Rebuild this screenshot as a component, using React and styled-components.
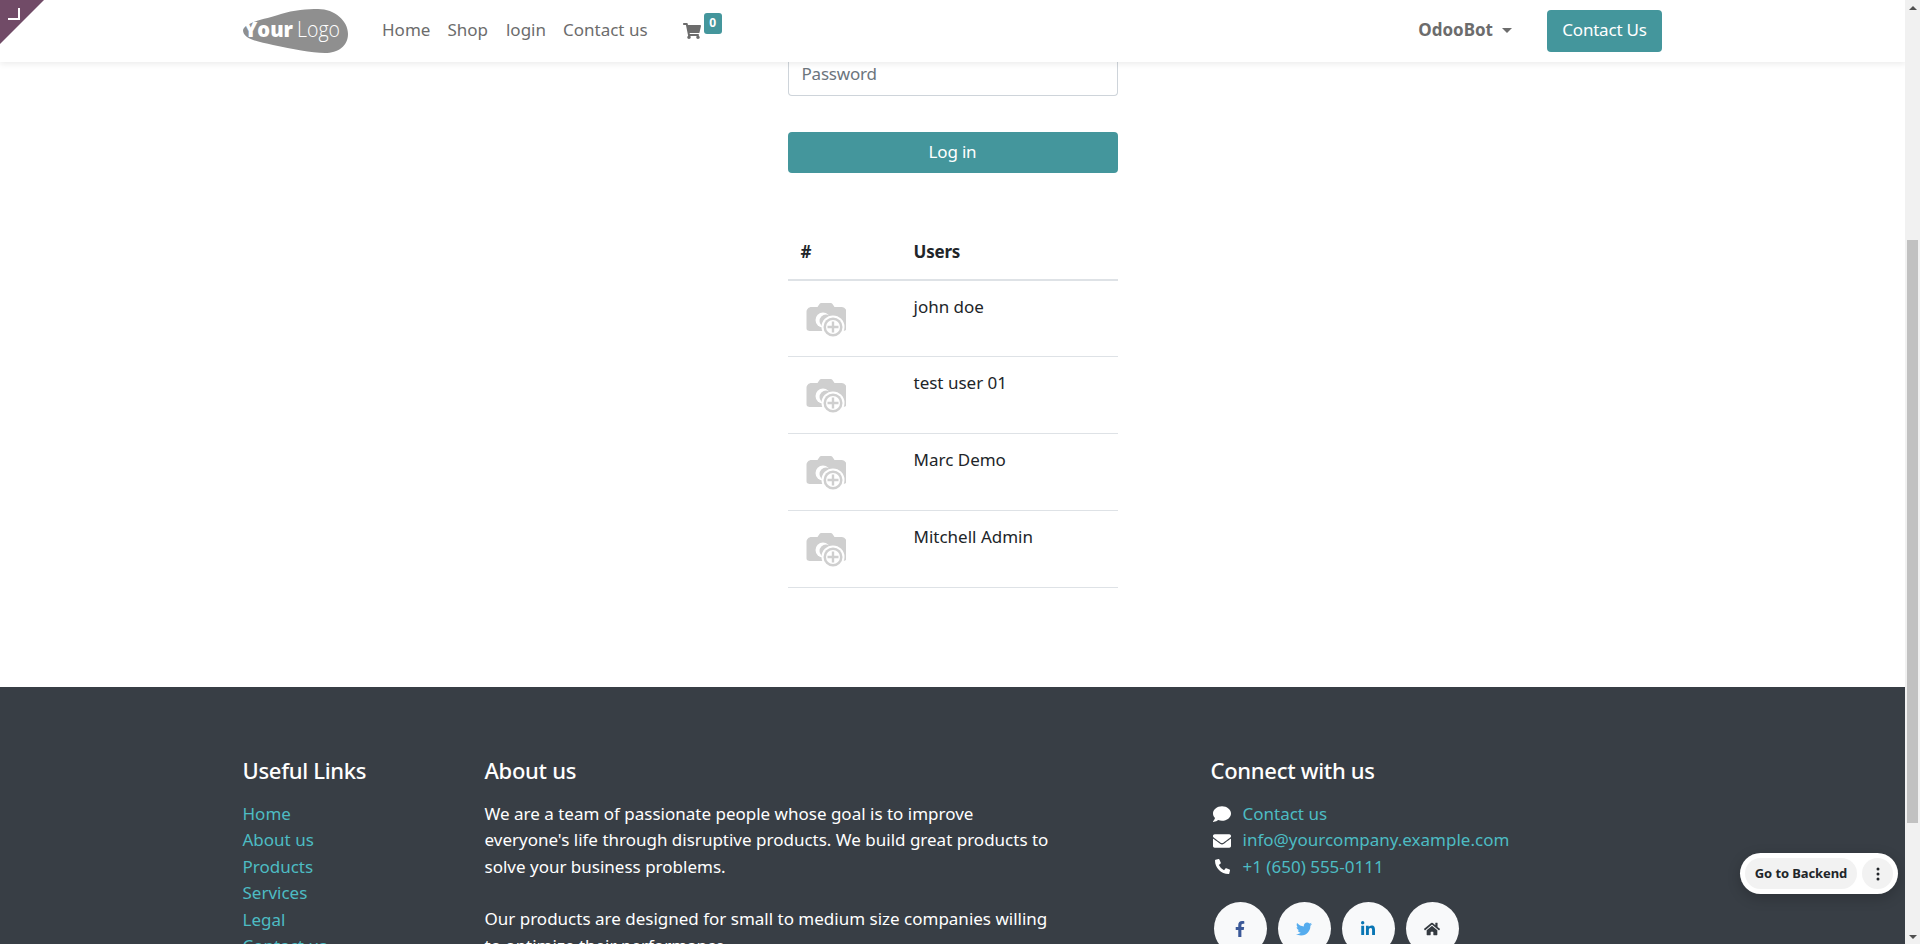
import React from "react";
import styled, { createGlobalStyle } from "styled-components";
import { FaShoppingCart, FaComment, FaEnvelope, FaPhoneAlt, FaFacebookF, FaTwitter, FaLinkedinIn, FaHome } from "react-icons/fa";

const Global = createGlobalStyle`
  html, body { margin: 0; padding: 0; height: 100%; overflow: hidden; }
  body { font-family: "Noto Sans", "Open Sans", sans-serif; font-size: 17px; line-height: 1.55; color: #212529; background: #fff; }
  * { box-sizing: border-box; }
`;

const Shell = styled.div`display: flex; height: 944px; overflow: hidden;`;
const Viewport = styled.div`flex: 1; min-width: 0; position: relative; overflow: hidden; display: flex; flex-direction: column;`;

const ScrollTrack = styled.div`width: 15px; flex: none; background: #f1f1f1; display: flex; flex-direction: column; align-items: center; padding: 0 2px;`;
const ArrowBtn = styled.div`
  flex: none; height: 15px; width: 100%; display: flex; align-items: center; justify-content: center;
  &::before { content: ""; border-left: 4px solid transparent; border-right: 4px solid transparent; ${p => p.$down ? "border-top: 4px solid #505050;" : "border-bottom: 4px solid #505050;"} }
`;
const ScrollGap = styled.div`flex: ${p => p.$size} 0 0;`;
const ScrollThumb = styled.div`flex: none; height: 583px; width: 100%; background: #c1c1c1;`;

const Header = styled.header`flex: none; height: 62px; background: #fff; box-shadow: 0 2px 6px rgba(0,0,0,.08); position: relative; z-index: 2; margin-right: -1px;`;
const Container = styled.div`width: 1420px; margin: 0 auto; display: flex; align-items: center;`;
const HeaderRow = styled(Container)`height: 62px; padding-bottom: 1px;`;
const LogoSvg = styled.svg`width: 105px; height: 44px; flex: none; margin-right: 34px;`;
const NavLink = styled.a`color: #6c6c6c; font-size: 17px; margin-right: ${p => p.$gap}px; white-space: nowrap;`;
const Cart = styled.span`position: relative; display: flex; align-items: center; color: #6c6c6c; margin-left: 18px; font-size: 18px;`;
const Badge = styled.span`
  position: absolute; left: 21px; top: -9px; width: 18px; height: 21px; border-radius: 3px; background: #44969c;
  color: #fff; font-size: 12px; font-weight: 700; display: flex; align-items: center; justify-content: center; line-height: 1;
`;
const Spacer = styled.div`flex: 1;`;
const UserMenu = styled.span`color: #6c6c6c; font-weight: 700; font-size: 17px; display: flex; align-items: center; margin-right: 35px;
  &::after { content: ""; margin-left: 9px; border-top: 5px solid #6c6c6c; border-left: 5px solid transparent; border-right: 5px solid transparent; }
`;
const ContactBtn = styled.a`
  width: 115px; height: 42px; margin-right: 1px; background: #44969c; border-radius: 4px; color: #fff; font-size: 17px; letter-spacing: -0.2px;
  display: flex; align-items: center; justify-content: center; white-space: nowrap;
`;

const Main = styled.main`flex: none; height: 625px; display: flex; justify-content: center;`;
const Column = styled.div`width: 330px;`;
const PasswordField = styled.div`height: 34px; border: 1px solid #ced4da; border-top: none; border-radius: 0 0 4px 4px; padding-left: 13px; color: #6c757d; font-size: 17px; line-height: 24px; letter-spacing: -0.2px;`;
const LoginBtn = styled.button`
  display: block; width: 100%; height: 41px; margin-top: 36px; border: none; border-radius: 4px; background: #44969c; color: #fff;
  font: inherit; font-size: 17px; letter-spacing: -0.2px;
`;
const Table = styled.table`width: 100%; margin-top: 38px; border-collapse: collapse; font-size: 17px;
  th { text-align: left; font-weight: 700; height: 69px; padding: 15px 0 0 14px; border-bottom: 2px solid #dee2e6; letter-spacing: -0.2px; }
  td { height: 76.8px; padding: 13px 0 0 14px; vertical-align: top; border-bottom: 1px solid #dee2e6; }
  th:first-child, td:first-child { width: 112px; }
  th:first-child { padding-left: 13px; }
  td:first-child { padding: 22px 0 0 18px; }
`;
const CameraSvg = styled.svg`display: block; width: 40px; height: 36px;`;

const Footer = styled.footer`flex: 1; background: #383e45; color: #fff; padding-top: 67px;`;
const FooterGrid = styled(Container)`align-items: flex-start;`;
const FootCol = styled.div`width: ${p => p.$w}px; flex: none;`;
const FootTitle = styled.h5`margin: 0 0 15px; font-size: 22px; font-weight: 500; line-height: 32px; letter-spacing: -0.3px;`;
const LinkList = styled.div`display: flex; flex-direction: column; line-height: 26.4px;`;
const FootLink = styled.a`color: #4dbcc3; font-size: 17px; white-space: nowrap;`;
const AboutText = styled.p`margin: 0 0 26px; font-size: 17px; line-height: 26.4px; white-space: nowrap;`;
const ContactRow = styled.div`display: flex; align-items: center; height: 26.4px; font-size: 17px;`;
const ContactIcon = styled.span`width: 32px; flex: none; padding-left: ${p => p.$pad}px; display: flex; align-items: center; color: #fff; font-size: ${p => p.$size}px;`;
const Socials = styled.div`display: flex; gap: 11px; margin: 22px 0 0 3px;`;
const Social = styled.span`width: 53px; height: 53px; border-radius: 50%; background: #f8f9fa; display: flex; align-items: center; justify-content: center; color: ${p => p.$color}; font-size: 16px;`;

const Ribbon = styled.div`
  position: absolute; left: 0; top: 0; width: 44px; height: 44px; background: #714b67; clip-path: polygon(0 0, 100% 0, 0 100%); z-index: 3;
  &::after { content: ""; position: absolute; left: 8px; top: 8px; width: 10px; height: 10px; border-right: 2px solid #fff; border-bottom: 2px solid #fff; }
`;
const BackendPill = styled.div`
  position: absolute; left: 1740px; top: 853px; width: 158px; height: 41px; border-radius: 21px; background: #fff; z-index: 3;
  box-shadow: 0 4px 14px rgba(0,0,0,.2); display: flex; align-items: center; padding: 0 5px; gap: 5px;
`;
const BackendBtn = styled.span`flex: 1; height: 31px; border-radius: 16px; background: #f2f2f2; color: #212529; font-size: 13px; font-weight: 700; letter-spacing: -0.1px; display: flex; align-items: center; justify-content: center; white-space: nowrap;`;
const KebabBtn = styled.span`width: 31px; height: 31px; border-radius: 50%; background: #f2f2f2; flex: none; display: flex; align-items: center; justify-content: center; color: #212529;`;

const Camera = () => (
  <CameraSvg viewBox="0 0 40 36" aria-hidden="true">
    <path d="M5 4h6l2-3c.4-.6 1-1 1.800-1h9.400c.8 0 1.400.4 1.800 1l2 3h7c2.800 0 5 2.200 5 5v16c0 2.800-2.200 3-5 3H5c-2.800 0-5-.2-5-3V9c0-2.800 2.200-5 5-5z" fill="#cfcfcf" transform="translate(.5 0)" />
    <circle cx="17" cy="17" r="7.500" fill="#fff" />
    <circle cx="20" cy="18" r="6.500" fill="#cfcfcf" />
    <circle cx="27" cy="24" r="11.500" fill="#fff" />
    <circle cx="27" cy="24" r="9.500" fill="#cfcfcf" />
    <circle cx="27" cy="24" r="7" fill="#fff" />
    <path d="M25.800 18.500h2.400v4.300h4.300v2.400h-4.300v4.300h-2.400v-4.300h-4.300v-2.400h4.300z" fill="#cfcfcf" />
  </CameraSvg>
);

const Logo = () => (
  <LogoSvg viewBox="0 0 105 44" aria-label="Your Logo">
    <path d="M0 21C3 12 25 10 38 5 50 1 65 0 75 0c17 0 30 12 30 25 0 12-10 19-23 19-14 0-32-4-52-8C15 33 0 30 0 21z" fill="#8f8f8f" />
    <text x="1" y="28" fontFamily="Open Sans, sans-serif" fontWeight="800" fontSize="21" textLength="49" lengthAdjust="spacingAndGlyphs" fill="#fff">Your</text>
    <text x="54" y="28" fontFamily="Open Sans, sans-serif" fontWeight="300" fontSize="22" textLength="43" lengthAdjust="spacingAndGlyphs" fill="#fff">Logo</text>
  </LogoSvg>
);

const Kebab = () => (
  <svg width="4" height="14" viewBox="0 0 4 14" aria-hidden="true"><circle cx="2" cy="2" r="1.500" fill="currentColor" /><circle cx="2" cy="7" r="1.500" fill="currentColor" /><circle cx="2" cy="12" r="1.500" fill="currentColor" /></svg>
);

const users = ["john doe", "test user 01", "Marc Demo", "Mitchell Admin"];
const links = ["Home", "About us", "Products", "Services", "Legal", "Contact us"];

export default function App() {
  return (
    <>
      <Global />
      <Shell>
        <Viewport>
          <Ribbon />
          <Header>
            <HeaderRow>
              <Logo />
              <NavLink $gap={17}>Home</NavLink>
              <NavLink $gap={18}>Shop</NavLink>
              <NavLink $gap={17}>login</NavLink>
              <NavLink $gap={17}>Contact us</NavLink>
              <Cart><FaShoppingCart /><Badge>0</Badge></Cart>
              <Spacer />
              <UserMenu>OdooBot</UserMenu>
              <ContactBtn>Contact Us</ContactBtn>
            </HeaderRow>
          </Header>
          <Main>
            <Column>
              <PasswordField>Password</PasswordField>
              <LoginBtn>Log in</LoginBtn>
              <Table>
                <thead><tr><th>#</th><th>Users</th></tr></thead>
                <tbody>
                  {users.map(u => (<tr key={u}><td><Camera /></td><td>{u}</td></tr>))}
                </tbody>
              </Table>
            </Column>
          </Main>
          <Footer>
            <FooterGrid>
              <FootCol $w={242}>
                <FootTitle>Useful Links</FootTitle>
                <LinkList>{links.map(l => <FootLink key={l}>{l}</FootLink>)}</LinkList>
              </FootCol>
              <FootCol $w={726}>
                <FootTitle>About us</FootTitle>
                <AboutText>We are a team of passionate people whose goal is to improve<br />everyone's life through disruptive products. We build great products to<br />solve your business problems.</AboutText>
                <AboutText>Our products are designed for small to medium size companies willing<br />to optimize their performance.</AboutText>
              </FootCol>
              <FootCol $w={452}>
                <FootTitle>Connect with us</FootTitle>
                <ContactRow><ContactIcon $pad={2} $size={18}><FaComment /></ContactIcon><FootLink>Contact us</FootLink></ContactRow>
                <ContactRow><ContactIcon $pad={2} $size={18}><FaEnvelope /></ContactIcon><FootLink>info@yourcompany.example.com</FootLink></ContactRow>
                <ContactRow><ContactIcon $pad={4} $size={15}><FaPhoneAlt /></ContactIcon><FootLink>+1 (650) 555-0111</FootLink></ContactRow>
                <Socials>
                  <Social $color="#3b5998"><FaFacebookF /></Social>
                  <Social $color="#55acee"><FaTwitter /></Social>
                  <Social $color="#0976b4"><FaLinkedinIn /></Social>
                  <Social $color="#343a40"><FaHome /></Social>
                </Socials>
              </FootCol>
            </FooterGrid>
          </Footer>
          <BackendPill>
            <BackendBtn>Go to Backend</BackendBtn>
            <KebabBtn><Kebab /></KebabBtn>
          </BackendPill>
        </Viewport>
        <ScrollTrack>
          <ArrowBtn />
          <ScrollGap $size={225} />
          <ScrollThumb />
          <ScrollGap $size={106} />
          <ArrowBtn $down />
        </ScrollTrack>
      </Shell>
    </>
  );
}
